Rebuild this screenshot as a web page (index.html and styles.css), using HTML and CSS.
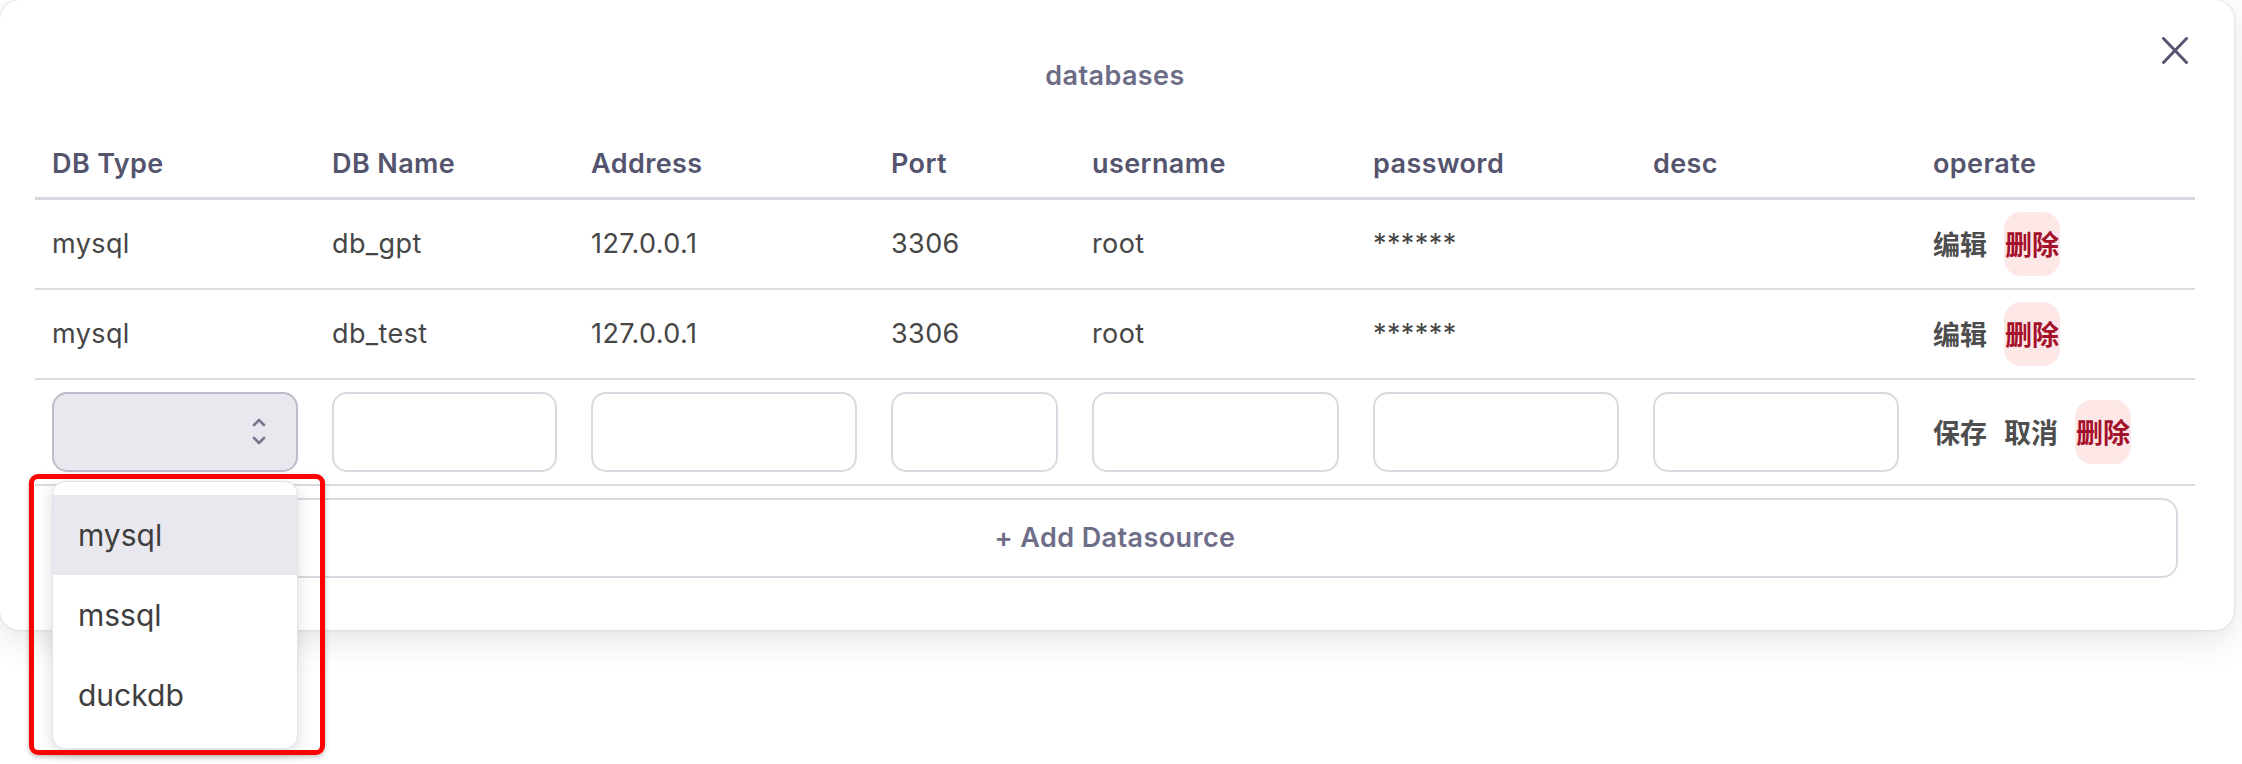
FILE: index.html
```html
<!DOCTYPE html>
<html lang="en">
<head>
<meta charset="utf-8">
<title>databases</title>
<link rel="stylesheet" href="styles.css">
</head>
<body>
<div class="modal">
  <div class="modal-head">
    <span></span>
    <h2 class="title">databases</h2>
    <button class="close" aria-label="close">
      <svg width="26" height="27" viewBox="0 0 26 27"><path d="M1.5 1.5 L24.5 25.5 M24.5 1.5 L1.5 25.5" stroke="#565670" stroke-width="3" stroke-linecap="round" fill="none"/></svg>
    </button>
  </div>
  <table class="grid">
    <colgroup>
      <col class="c1"><col class="c2"><col class="c3"><col class="c4"><col class="c5"><col class="c6"><col class="c7"><col class="c8">
    </colgroup>
    <thead>
      <tr>
        <th>DB Type</th><th>DB Name</th><th>Address</th><th>Port</th><th>username</th><th>password</th><th>desc</th><th>operate</th>
      </tr>
    </thead>
    <tbody>
      <tr>
        <td>mysql</td><td>db_gpt</td><td>127.0.0.1</td><td>3306</td><td>root</td><td class="mask">******</td><td></td>
        <td><div class="ops"><span class="op">编辑</span><span class="op danger">删除</span></div></td>
      </tr>
      <tr>
        <td>mysql</td><td>db_test</td><td>127.0.0.1</td><td>3306</td><td>root</td><td class="mask">******</td><td></td>
        <td><div class="ops"><span class="op">编辑</span><span class="op danger">删除</span></div></td>
      </tr>
      <tr class="edit-row">
        <td>
          <div class="select-wrap">
            <div class="select">
              <svg width="14" height="29" viewBox="0 0 14 29"><path d="M2 8 L7 3 L12 8 M2 21 L7 26 L12 21" stroke="#77768f" stroke-width="2.6" stroke-linecap="round" stroke-linejoin="round" fill="none"/></svg>
            </div>
            <ul class="dropdown">
              <li class="active">mysql</li>
              <li>mssql</li>
              <li>duckdb</li>
            </ul>
            <div class="highlight"></div>
          </div>
        </td>
        <td><div class="field"></div></td>
        <td><div class="field"></div></td>
        <td><div class="field"></div></td>
        <td><div class="field"></div></td>
        <td><div class="field"></div></td>
        <td><div class="field"></div></td>
        <td><div class="ops"><span class="op">保存</span><span class="op">取消</span><span class="op danger">删除</span></div></td>
      </tr>
    </tbody>
  </table>
  <button class="add">+ Add Datasource</button>
</div>
</body>
</html>
```

FILE: styles.css
```css
html, body {
  margin: 0;
  padding: 0;
  background: #ffffff;
}

body {
  font-family: Inter, "Noto Sans", "Noto Sans CJK SC", sans-serif;
  width: 2242px;
  height: 764px;
  overflow: hidden;
}

.modal {
  width: 2234px;
  box-sizing: border-box;
  background: #ffffff;
  border-radius: 20px;
  padding: 0 39px 52px 35px;
  box-shadow: 0 10px 36px rgba(0, 0, 0, 0.11), 0 0 0 1.5px rgba(0, 0, 0, 0.05);
}

.modal-head {
  display: grid;
  grid-template-columns: 1fr auto 1fr;
  align-items: start;
  height: 130px;
}

.title {
  margin: 0;
  padding-top: 61px;
  font-size: 27px;
  line-height: 30px;
  letter-spacing: 0.4px;
  font-weight: 600;
  color: #6d6c86;
}

.close {
  justify-self: end;
  margin: 37px 7px 0 0;
  padding: 0;
  border: 0;
  background: none;
  width: 26px;
  height: 27px;
  display: block;
}

.close svg { display: block; }

.grid {
  width: 2160px;
  border-collapse: collapse;
  table-layout: fixed;
}

.c1 { width: 280px; }
.c2 { width: 259px; }
.c3 { width: 300px; }
.c4 { width: 201px; }
.c5 { width: 281px; }
.c6 { width: 280px; }
.c7 { width: 280px; }
.c8 { width: 279px; }

.grid th {
  height: 68px;
  padding: 0 0 0 17px;
  text-align: left;
  font-size: 27px;
  letter-spacing: 0.4px;
  font-weight: 600;
  color: #55546f;
  border-bottom: 3px solid #d8d7df;
  vertical-align: middle;
  box-sizing: border-box;
}

.grid td {
  height: 88px;
  padding: 0 17px;
  font-size: 27px;
  letter-spacing: 0.4px;
  color: #464646;
  border-bottom: 2px solid #dcdbe2;
  vertical-align: middle;
}

.edit-row td {
  height: 104px;
}

.ops {
  display: flex;
  align-items: center;
  gap: 17px;
}

.op {
  font-size: 27px;
  line-height: 28px;
  letter-spacing: 0;
  font-weight: 700;
  color: #4e4e4e;
  font-family: "Noto Sans CJK SC", sans-serif;
}

.op.danger {
  color: #a3112b;
  background: #fde7e7;
  border-radius: 17px;
  padding: 18px 1px;
}

.select-wrap {
  position: relative;
}

.select {
  height: 80px;
  box-sizing: border-box;
  background: #e9e8ef;
  border: 2px solid #bdbccb;
  border-radius: 15px;
  display: flex;
  align-items: center;
  justify-content: flex-end;
  padding-right: 30px;
}

.select svg { display: block; }

.field {
  height: 80px;
  box-sizing: border-box;
  border: 2px solid #dad9e1;
  border-radius: 15px;
  background: #ffffff;
}

.dropdown {
  position: absolute;
  z-index: 5;
  left: 0;
  top: 89px;
  width: 246px;
  margin: 0;
  padding: 13px 0;
  list-style: none;
  background: #ffffff;
  border: 1px solid #e2e1e6;
  border-radius: 13px;
  box-sizing: border-box;
  box-shadow: 0 4px 16px rgba(0, 0, 0, 0.14);
}

.dropdown li {
  height: 80px;
  line-height: 80px;
  padding-left: 25px;
  font-size: 30px;
  letter-spacing: 0;
  color: #3e3e3e;
}

.dropdown li.active {
  background: #e9e8ee;
}

.highlight {
  position: absolute;
  z-index: 6;
  left: -23px;
  top: 82px;
  width: 296px;
  height: 281px;
  box-sizing: border-box;
  border: 5px solid #ff0000;
  border-radius: 9px;
  box-shadow: 0 2px 5px rgba(0, 0, 0, 0.25);
  pointer-events: none;
}

.add {
  display: block;
  width: 2126px;
  height: 80px;
  margin: 12px 17px 0;
  box-sizing: border-box;
  background: #ffffff;
  border: 2px solid #dad9e1;
  border-radius: 16px;
  font-family: Inter, "Noto Sans", sans-serif;
  font-size: 27px;
  letter-spacing: 0.4px;
  font-weight: 600;
  color: #6f6e88;
}
```
